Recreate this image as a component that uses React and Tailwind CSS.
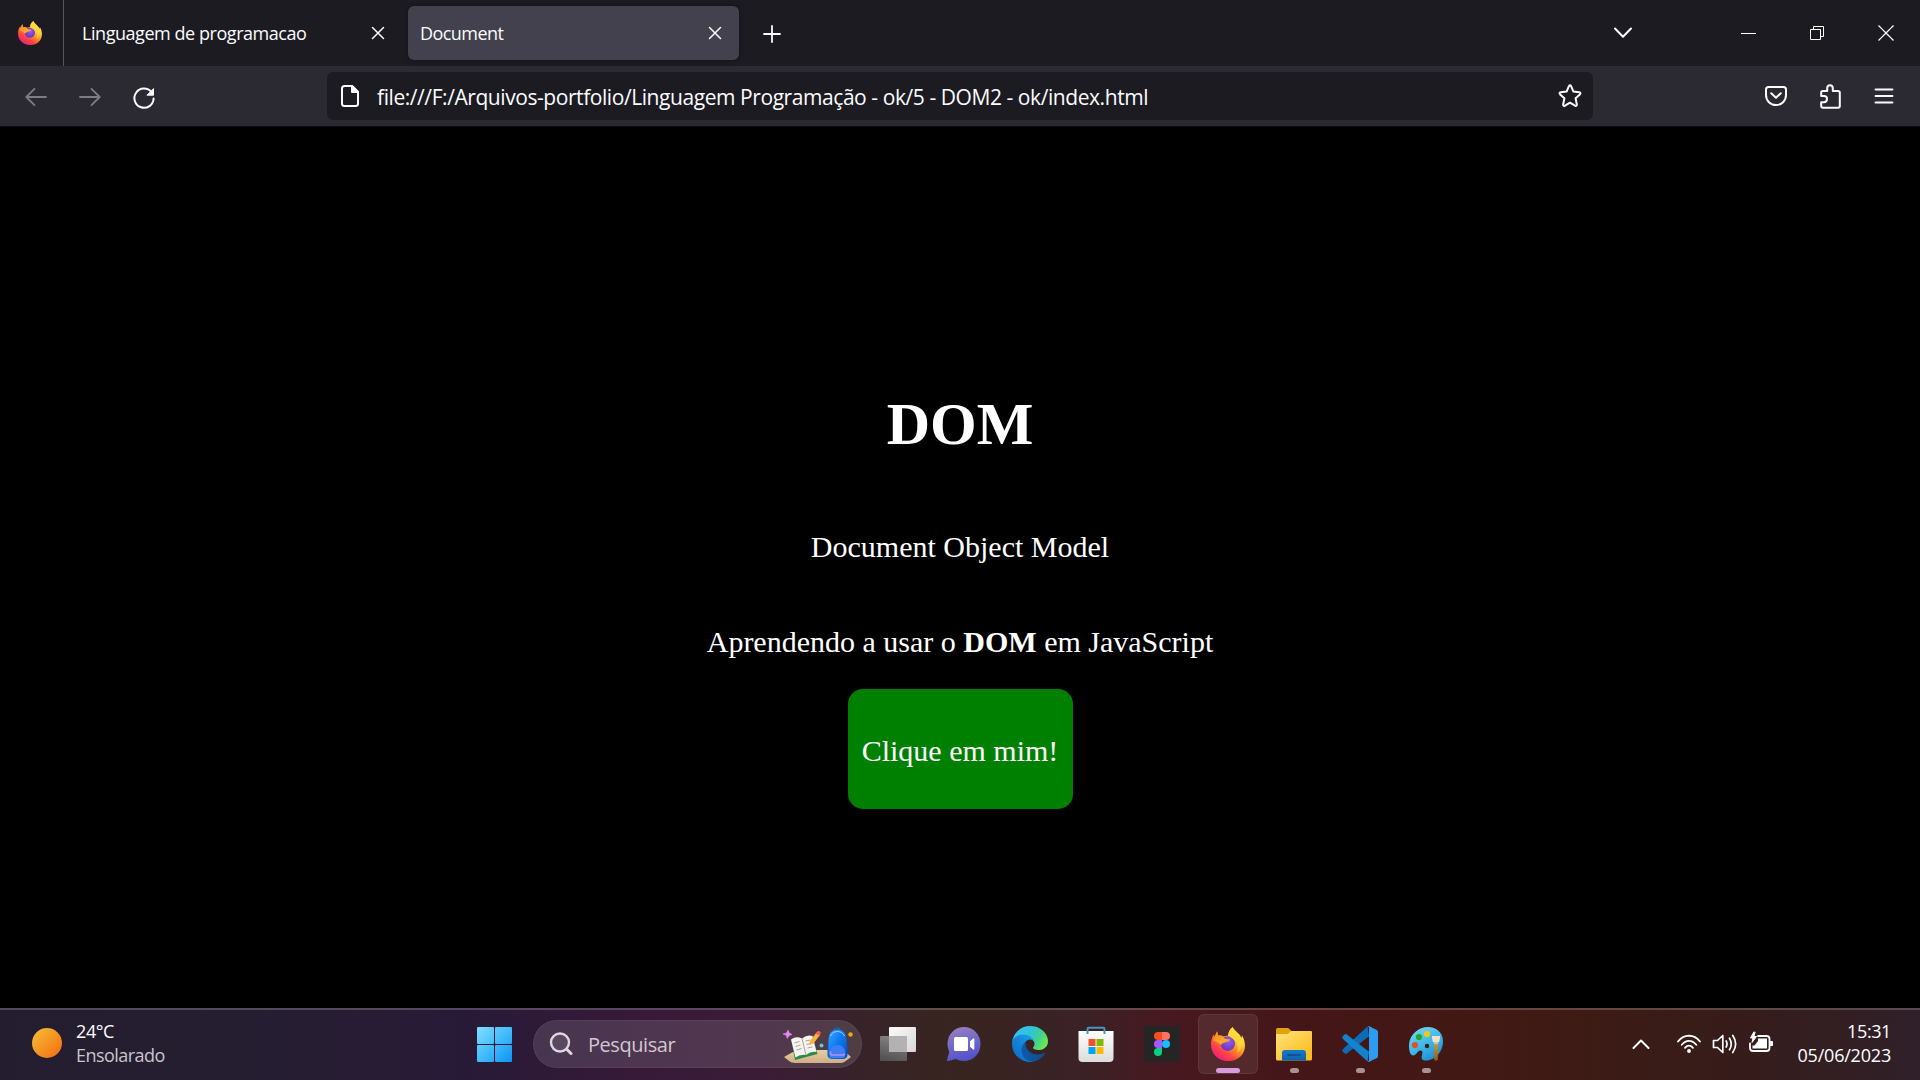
import React from "react";

function Firefox({ id, className }) {
  return (
    <svg viewBox="0 0 34 34" className={className}>
      <defs>
        <linearGradient id={`${id}-body`} x1="0.85" y1="0.1" x2="0.25" y2="0.95">
          <stop offset="0" stopColor="#fff44f" />
          <stop offset="0.28" stopColor="#ffcb37" />
          <stop offset="0.52" stopColor="#ff8a26" />
          <stop offset="0.76" stopColor="#ff4343" />
          <stop offset="1" stopColor="#f0207c" />
        </linearGradient>
        <radialGradient id={`${id}-globe`} cx="0.55" cy="0.35" r="0.7">
          <stop offset="0" stopColor="#a05be8" />
          <stop offset="1" stopColor="#5b35b8" />
        </radialGradient>
        <linearGradient id={`${id}-head`} x1="0" y1="0" x2="1" y2="1">
          <stop offset="0" stopColor="#ff8016" />
          <stop offset="0.6" stopColor="#ffa82a" />
          <stop offset="1" stopColor="#ff9826" />
        </linearGradient>
      </defs>
      <path
        fill={`url(#${id}-body)`}
        d="M21.7 0C22.8 3.8 28.6 5.8 30.4 11C31 10 30.8 9 30.6 8C34.8 13.5 35 22 31.4 27.2C28 32 22.5 34 17 34C7 34 0 27 0 17.5C0 13 1.2 10 3 7.3L3.5 10L6 4.6L7.4 8.8C9.4 8.2 11 8.4 12.6 9.6L17 8.6C17.4 5 19 2 21.7 0Z"
      />
      <circle cx="16.800" cy="16.6" r="7.3" fill={`url(#${id}-globe)`} />
      <path
        fill={`url(#${id}-head)`}
        d="M2.2 13.5L3.5 9.7L6 4.6L7.4 8.8C10.2 8.2 12 9 13.2 11.2C14.5 12 17 11.9 19.2 12.4C18.6 14.4 16 14.7 14 15.4C12 16.5 10.800 16 10.5 17.800C8.500 17 7 14.500 2.2 13.5Z"
      />
      <path
        fill="#ffd83a"
        fillOpacity="0.75"
        d="M21.7 0C22.8 3.8 29 6.5 30.4 12.5C31.8 18 30 23.5 26.2 26C28 20.5 26 16.5 23.6 13.6C20.8 11.2 18.4 9.6 17 8.6C17.4 5 19 2 21.7 0Z"
      />
    </svg>
  );
}

function Edge() {
  return (
    <svg viewBox="0 0 256 256" className="size-9">
      <defs>
        <linearGradient id="edge-a" x1="0.25" y1="0.5" x2="1" y2="0.5">
          <stop offset="0" stopColor="#0c59a4" />
          <stop offset="1" stopColor="#114a8b" />
        </linearGradient>
        <linearGradient id="edge-b" x1="0.9" y1="0.2" x2="0.3" y2="1">
          <stop offset="0" stopColor="#1b9de2" />
          <stop offset="0.5" stopColor="#1481d8" />
          <stop offset="1" stopColor="#0a6fcb" />
        </linearGradient>
        <linearGradient id="edge-c" x1="0.1" y1="0.3" x2="1" y2="0.65">
          <stop offset="0" stopColor="#35c1f1" />
          <stop offset="0.4" stopColor="#2fc4d8" />
          <stop offset="0.7" stopColor="#42d28c" />
          <stop offset="1" stopColor="#6fea4e" />
        </linearGradient>
      </defs>
      <g transform="translate(-4.63 -4.92)">
        <path
          fill="url(#edge-a)"
          d="M235.68 195.46a93.73 93.73 0 0 1-10.54 4.71 101.87 101.87 0 0 1-35.9 6.46c-47.32 0-88.54-32.55-88.54-74.32A31.48 31.48 0 0 1 117.13 105c-42.8 1.8-53.8 46.4-53.8 72.53 0 73.88 68.09 81.37 82.76 81.37 7.91 0 19.84-2.3 27-4.56l1.31-.44a128.34 128.34 0 0 0 66.6-52.8 4 4 0 0 0-5.32-5.64z"
        />
        <path
          fill="url(#edge-b)"
          d="M110.34 246.34A79.2 79.2 0 0 1 87.6 225a80.72 80.72 0 0 1 29.53-120c3.12-1.47 8.45-4.13 15.54-4a32.35 32.35 0 0 1 25.69 13 31.88 31.88 0 0 1 6.36 18.66c0-.21 24.46-79.6-80-79.6-43.9 0-80 41.66-80 78.21a130.15 130.15 0 0 0 12.11 56 128 128 0 0 0 156.38 67.11 75.55 75.55 0 0 1-62.78-8z"
        />
        <path
          fill="url(#edge-c)"
          d="M156.94 153.78c-.81 1.05-3.3 2.5-3.3 5.66 0 2.61 1.7 5.12 4.72 7.23 14.38 10 41.49 8.68 41.56 8.68a59.56 59.56 0 0 0 30.27-8.35 61.38 61.38 0 0 0 30.43-52.88c.26-22.41-8-37.31-11.34-43.91C228.09 28.76 182.35 4.92 132.61 4.92a128 128 0 0 0-128 126.2c.48-36.54 36.8-66.05 80-66.05 3.5 0 23.46.34 42 10.07 16.34 8.58 24.9 18.94 30.85 29.21 6.18 10.67 7.28 24.15 7.28 29.52s-2.74 13.33-7.8 19.91z"
        />
      </g>
    </svg>
  );
}

function Windows() {
  return (
    <svg viewBox="0 0 36 36" className="size-9">
      <defs>
        <linearGradient id="win" gradientUnits="userSpaceOnUse" x1="0" y1="0" x2="36" y2="36">
          <stop offset="0" stopColor="#84dfff" />
          <stop offset="0.5" stopColor="#42bcfb" />
          <stop offset="1" stopColor="#0b93f2" />
        </linearGradient>
      </defs>
      <g fill="url(#win)">
        <rect x="1" y="0" width="17" height="17" rx="1" />
        <rect x="19" y="0" width="17" height="17" rx="1" />
        <rect x="1" y="18" width="17" height="17" rx="1" />
        <rect x="19" y="18" width="17" height="17" rx="1" />
      </g>
    </svg>
  );
}

function TaskView() {
  return (
    <svg viewBox="0 0 36 36" className="size-9">
      <defs>
        <linearGradient id="tv-back" x1="0" y1="0" x2="1" y2="1">
          <stop offset="0" stopColor="#fdfdfd" />
          <stop offset="1" stopColor="#d8d6d6" />
        </linearGradient>
        <linearGradient id="tv-front" x1="0.8" y1="0" x2="0.5" y2="1">
          <stop offset="0" stopColor="#8b8989" />
          <stop offset="1" stopColor="#555353" />
        </linearGradient>
      </defs>
      <rect x="9" y="1" width="27" height="25" rx="1" fill="url(#tv-back)" />
      <rect x="0" y="10" width="27" height="25" rx="1" fill="url(#tv-front)" />
      <rect x="9" y="10" width="18" height="16" fill="#b3b1b1" />
    </svg>
  );
}

function Chat() {
  return (
    <svg viewBox="0 0 36 36" className="size-9">
      <defs>
        <linearGradient id="chat" x1="0.3" y1="0" x2="0.6" y2="1">
          <stop offset="0" stopColor="#9a7cc0" />
          <stop offset="0.5" stopColor="#6f69c9" />
          <stop offset="1" stopColor="#4f50c8" />
        </linearGradient>
      </defs>
      <path
        fill="url(#chat)"
        d="M18 1C8.600 1 1.500 8.500 1.500 18C1.500 21 2.200 23.500 3.300 25.800L1.100 33.500C.9 34.400 1.600 35.200 2.600 35L9.500 33C12 34.300 15 35 18 35C27.400 35 34.500 27.500 34.500 18S27.400 1 18 1Z"
      />
      <rect x="8" y="11" width="14" height="14" rx="1.500" fill="#fff" />
      <path d="M24 15.300L27.300 12.500Q28.300 12 28.300 13.200V22.800Q28.300 24 27.300 23.500L24 20.700Z" fill="#fff" />
    </svg>
  );
}

function Store() {
  return (
    <svg viewBox="0 0 36 36" className="size-9">
      <defs>
        <linearGradient id="bag" x1="0" y1="0" x2="0" y2="1">
          <stop offset="0" stopColor="#ffffff" />
          <stop offset="1" stopColor="#dcdcdc" />
        </linearGradient>
      </defs>
      <path d="M.5 5H35.500V32Q35.500 36 31.500 36H4.500Q.5 36 .5 32Z" fill="url(#bag)" />
      <path d="M9.500 8V3Q9.500 1.800 10.700 1.800H25.300Q26.500 1.800 26.500 3V8" fill="none" stroke="#3b9ac6" strokeWidth="2" />
      <rect x="10.500" y="13" width="7" height="7" fill="#f25022" />
      <rect x="18.500" y="13" width="7" height="7" fill="#7fba00" />
      <rect x="10.500" y="21" width="7" height="7" fill="#00a4ef" />
      <rect x="18.500" y="21" width="7" height="7" fill="#ffb900" />
    </svg>
  );
}

function Figma() {
  return (
    <svg viewBox="0 0 36 36" className="size-9">
      <rect width="36" height="36" fill="#252525" />
      <path d="M18 6H14a4 4 0 0 0 0 8H18Z" fill="#f24e1e" />
      <path d="M18 6H22a4 4 0 0 1 0 8H18Z" fill="#ff7262" />
      <path d="M18 14H14a4 4 0 0 0 0 8H18Z" fill="#a259ff" />
      <circle cx="22" cy="18" r="4" fill="#1abcfe" />
      <path d="M18 22H14a4 4 0 1 0 4 4Z" fill="#0acf83" />
    </svg>
  );
}

function Folder() {
  return (
    <svg viewBox="0 0 36 36" className="size-9">
      <defs>
        <linearGradient id="folder" x1="0" y1="0" x2="1" y2="1">
          <stop offset="0" stopColor="#ffe27a" />
          <stop offset="1" stopColor="#fbb914" />
        </linearGradient>
        <linearGradient id="folder-tag" x1="0" y1="0" x2="0" y2="1">
          <stop offset="0" stopColor="#1879c8" />
          <stop offset="1" stopColor="#1061ab" />
        </linearGradient>
      </defs>
      <path d="M0 3.500Q0 2 1.500 2H11.500Q12.500 2 13.200 2.700L15.500 5H20V12H0Z" fill="#dfa10c" />
      <path d="M0 8H11Q12 8 12.800 7.200L14.400 5.600Q15 5 16 5H35Q36 5 36 6V33Q36 34.500 34.500 34.500H1.500Q0 34.500 0 33Z" fill="url(#folder)" />
      <path d="M6 34.500V27Q6 24 9 24H27Q30 24 30 27V34.500Z" fill="url(#folder-tag)" />
      <rect x="11" y="28.300" width="14" height="1.500" rx="0.700" fill="#0b4c8c" />
    </svg>
  );
}

function VSCode() {
  return (
    <svg viewBox="0 0 36 36" className="size-9">
      <path d="M25.500.4L1 23Q-.4 24.400 1 25.900L2.700 27.500Q3.700 28.300 4.800 27.500L27 10.300Z" fill="#0c6db6" />
      <path d="M25.500 35.600L1 13Q-.4 11.600 1 10.100L2.700 8.500Q3.700 7.700 4.800 8.500L27 25.700Z" fill="#1483cf" />
      <path d="M25.400.3Q26.300-.2 27.300.3L34.800 3.900Q36 4.500 36 5.800V30.200Q36 31.500 34.800 32.100L27.300 35.700Q26.300 36.200 25.400 35.700Q27 35.500 27 34V2Q27 .5 25.400.3Z" fill="#2b9cf0" />
    </svg>
  );
}

function Paint() {
  return (
    <svg viewBox="0 0 36 36" className="size-9">
      <defs>
        <linearGradient id="palette" x1="0.2" y1="0" x2="0.8" y2="1">
          <stop offset="0" stopColor="#6fd8f2" />
          <stop offset="0.6" stopColor="#35b0e4" />
          <stop offset="1" stopColor="#1a86cd" />
        </linearGradient>
        <linearGradient id="handle" x1="0" y1="0" x2="0" y2="1">
          <stop offset="0" stopColor="#d69a3a" />
          <stop offset="1" stopColor="#8d5a14" />
        </linearGradient>
      </defs>
      <path
        fill="url(#palette)"
        fillRule="evenodd"
        d="M20 1C11 1 1.500 8 1 19C.8 24 2.200 29.500 5 29.500C8.500 29.500 9.500 24 13 24.500C16.500 25.200 12.500 30 14 33C15 35 18.500 34.800 21.500 34C29.500 32 35 24 35 15.500C35 6.500 28.500 1 20 1ZM19 17.800A2.200 2.200 0 1 1 19 22.200A2.200 2.200 0 1 1 19 17.800Z"
      />
      <circle cx="7" cy="19" r="3.100" fill="#d9532c" />
      <circle cx="11" cy="11" r="3.100" fill="#27a32b" />
      <circle cx="19" cy="8" r="3.100" fill="#fdc21b" />
      <path d="M26 17H30L29.800 33.500Q28 36 26.200 33.500Z" fill="url(#handle)" />
      <path d="M24 10H32V12Q32 15 30 17H26Q24 15 24 12Z" fill="#f1dfc8" />
      <rect x="26" y="16" width="4" height="2" fill="#c9c4c0" />
    </svg>
  );
}

function SchoolArt() {
  return (
    <svg viewBox="0 0 72 38" className="h-[38px] w-[72px]">
      <defs>
        <linearGradient id="sand" x1="0" y1="0" x2="0" y2="1">
          <stop offset="0" stopColor="#e9cfa4" />
          <stop offset="1" stopColor="#cfae82" />
        </linearGradient>
        <linearGradient id="pack" x1="0" y1="0" x2="1" y2="1">
          <stop offset="0" stopColor="#3aa8ff" />
          <stop offset="0.5" stopColor="#0b78ee" />
          <stop offset="1" stopColor="#0a4fc4" />
        </linearGradient>
      </defs>
      <path d="M2 30L10 25.500Q14 23 20 23H56Q62 23 69 30L63 34.500Q61 36 58 36H13Q9 36 7 34Z" fill="url(#sand)" />
      <path d="M9.500 14L31 10L35.500 27L13 33Z" fill="#2f8a4a" />
      <path d="M9 12.500Q14 8.500 20 11.500Q25 7.500 30.500 9L34.500 25Q29 24 24 28Q18 27 13.500 30.500Z" fill="#f7f3ef" />
      <path d="M20 11.500L24 28M12.500 16L17.500 14.500M13.500 19.500L18.500 18M14.500 23L19.500 21.500M23.500 14L28.500 13M24.500 17.500L29.500 16.500M25.500 21L30.500 20" stroke="#a8a39f" strokeWidth="1" fill="none" />
      <path d="M28 14L34.500 5.500L38 8L31.500 16.500L27 18Z" fill="#f8b23f" />
      <path d="M33.500 6.500L35.500 4.200Q37.500 3.500 38.700 5.200Q39 6.500 37.500 8.800Z" fill="#ee6352" />
      <path d="M6 3L7.300 6L10 7.500L7 8.600L5.300 11.500L4.300 8.300L1 7L4.500 6Z" fill="#e58af5" stroke="#e58af5" strokeWidth="0.600" />
      <circle cx="39.500" cy="18.500" r="2" fill="#5cc7dd" />
      <circle cx="68.500" cy="7.500" r="2.200" fill="#f0a818" />
      <path d="M52 4Q52 1 55 1T58 4" fill="none" stroke="#1460b8" strokeWidth="1.500" />
      <rect x="45.500" y="14" width="20" height="17" rx="3" fill="#0a4fc4" />
      <path d="M46.500 13Q46.500 2.500 55.500 2.500T64.500 13V29Q64.500 32 61.500 32H49.500Q46.500 32 46.500 29Z" fill="url(#pack)" />
      <path d="M48.500 9Q50.500 4.500 55.500 4.500T62.500 9" fill="none" stroke="#8fd0ff" strokeWidth="1" />
      <path d="M48 26Q48 18 55.500 18T63 26V29Q63 31 61 31H50Q48 31 48 29Z" fill="#3f7df5" />
      <path d="M48.500 24.500V26.500Q48.500 28 50 28H61Q62.500 28 62.500 26.500" fill="none" stroke="#b78cf5" strokeWidth="1.600" />
    </svg>
  );
}

function Line({ w, h, className, sw = 2, children }) {
  return (
    <svg width={w} height={h} viewBox={`0 0 ${w} ${h}`} className={className} fill="none" stroke="currentColor" strokeWidth={sw} strokeLinecap="round" strokeLinejoin="round">
      {children}
    </svg>
  );
}

function TabBar() {
  return (
    <div className="flex h-[66px] items-center bg-[#1c1b22] text-[18px] tracking-[-0.45px] text-[#fbfbfe]">
      <div className="flex h-full w-16 items-center border-r border-[#55545c] pl-[18px]">
        <Firefox id="ff-tab" className="size-6" />
      </div>
      <div className="flex w-[344px] items-center justify-between pl-[18px] pr-[23px]">
        <span className="leading-6">Linguagem de programacao</span>
        <Line w={14} h={14} sw={1.500}>
          <path d="M1.500 1.500L12.500 12.500M12.500 1.500L1.500 12.500" />
        </Line>
      </div>
      <div className="flex h-[54px] w-[331px] items-center justify-between rounded-md bg-[#42414d] pl-3 pr-[17px] shadow-[0_0_4px_rgba(0,0,0,0.4)]">
        <span className="leading-6 tracking-[-0.55px]">Document</span>
        <Line w={14} h={14} sw={1.500}>
          <path d="M1.500 1.500L12.500 12.500M12.500 1.500L1.500 12.500" />
        </Line>
      </div>
      <Line w={18} h={18} sw={1.800} className="ml-6 mt-0.5">
        <path d="M9 1V17M1 9H17" />
      </Line>
      <Line w={20} h={12} className="ml-auto mr-[108px]">
        <path d="M2 1.500L10 9.700L18 1.500" />
      </Line>
      <svg width="15" height="1" viewBox="0 0 15 1" className="mr-[54px]">
        <rect width="15" height="1" fill="#fff" />
      </svg>
      <svg width="14" height="14" viewBox="0 0 14 14" fill="none" stroke="#fff" className="mr-[54px]">
        <path d="M.5 3.500H10.500V13.500H.5ZM3.500 3.500V.5H13.500V10.500H10.500" />
      </svg>
      <svg width="16" height="16" viewBox="0 0 16 16" fill="none" stroke="#fff" strokeWidth="1.200" className="mr-[26px]">
        <path d="M.5.5L15.500 15.500M15.500.5L.5 15.500" />
      </svg>
    </div>
  );
}

function NavBar() {
  return (
    <div className="flex h-[60px] items-center bg-[#2b2a33] text-[#fbfbfe]">
      <Line w={22} h={20} sw={1.800} className="ml-[25px] mt-0.5 text-[#7d7c83]">
        <path d="M21 10H1.500M9.500 1.800L1.300 10L9.500 18.200" />
      </Line>
      <Line w={22} h={20} sw={1.800} className="ml-8 mt-0.5 text-[#7d7c83]">
        <path d="M1 10H20.500M12.500 1.800L20.700 10L12.500 18.200" />
      </Line>
      <Line w={24} h={24} className="ml-[31px] mt-1">
        <path d="M19.500 6.200A9.600 9.600 0 1 0 21.600 12.500" />
        <path d="M21.500 3V9.200H15.300Z" fill="currentColor" strokeWidth="1" />
      </Line>
      <div className="ml-[171px] flex h-12 w-[1266px] items-center rounded-md bg-[#1c1b22] pl-3.5">
        <Line w={18} h={22}>
          <path d="M3.500 1H11L17 7V18.500Q17 21 14.500 21H3.500Q1 21 1 18.500V3.500Q1 1 3.500 1Z" />
          <path d="M11 1V7H17Z" fill="currentColor" />
        </Line>
        <span className="ml-[18px] mt-0.5 whitespace-nowrap text-[21px] leading-7 tracking-[-0.43px]">
          file:///F:/Arquivos-portfolio/Linguagem Programação - ok/5 - DOM2 - ok/index.html
        </span>
        <Line w={24} h={24} className="ml-auto mr-[11px]">
          <path d="M10.900 2.200Q12 .4 13.100 2.200L15.400 7.600L21.200 8.300Q23.300 8.700 21.900 10.400L17.600 14.300L18.800 20.300Q19 22.500 17 21.700L12 18.700L7 21.700Q5 22.500 5.200 20.300L6.400 14.300L2.100 10.400Q.7 8.700 2.800 8.300L8.600 7.600Z" />
        </Line>
      </div>
      <Line w={22} h={20} className="ml-[172px]">
        <path d="M3.500 1H18.500Q21 1 21 3.500V9C21 14.800 16.500 19 11 19S1 14.800 1 9V3.500Q1 1 3.500 1Z" />
        <path d="M6.200 7.200L11 11.700L15.800 7.200" />
      </Line>
      <Line w={21} h={25} className="ml-[33px]">
        <path d="M1.200 11V8.500Q1.200 7 2.700 7H7.200V4.200Q7.200 1.200 10 1.200T12.800 4.200V7H18Q19.800 7 19.800 8.800V22Q19.800 23.700 18 23.700H3Q1.200 23.700 1.200 22V18.300H4Q7 18 7 15T4 12H1.200Z" />
      </Line>
      <Line w={20} h={16} sw={1.800} className="ml-[33px]">
        <path d="M1.500 1.500H18.500M1.500 8H18.500M1.500 14.500H18.500" />
      </Line>
    </div>
  );
}

function Page() {
  return (
    <main className="flex flex-1 flex-col items-center border-t border-[#0c0c0d] bg-black pt-[263px] font-['Liberation_Serif',serif] text-[30px] leading-[34px] text-white">
      <h1 className="text-[60px] font-bold leading-[68px]">DOM</h1>
      <p className="mt-[72px]">Document Object Model</p>
      <p className="mt-[61px]">
        Aprendendo a usar o <strong>DOM</strong> em JavaScript
      </p>
      <button className="mt-[30px] h-[120px] w-[225px] rounded-[15px] bg-[#008000] pt-[3px]">Clique em mim!</button>
    </main>
  );
}

function TaskItem({ children, active, running }) {
  return (
    <div className={`relative flex h-[60px] w-[60px] items-center justify-center rounded-md ${active ? "border border-white/7 bg-white/8" : ""}`}>
      {children}
      {active && <span className="absolute bottom-0 h-[5px] w-6 rounded-full bg-[#d99be0]" />}
      {running && <span className="absolute bottom-px h-[5px] w-[9px] rounded-full bg-[#ab9292]" />}
    </div>
  );
}

function Tray() {
  return (
    <div className="ml-auto flex items-center text-white">
      <Line w={18} h={10} className="mr-[26px] -mt-0.5">
        <path d="M1.500 9L9 1.500L16.500 9" />
      </Line>
      <Line w={26} h={20} className="mr-2.5 -mt-0.5">
        <path d="M2 7.500C8-.2 18-.2 24 7.500M5.700 10.700C10 5.500 16 5.500 20.300 10.700M9 13.800C11.500 11 14.500 11 17 13.800" strokeWidth="1.800" />
        <circle cx="13" cy="17" r="1.900" fill="currentColor" stroke="none" />
      </Line>
      <Line w={26} h={22} sw={1.700} className="mr-2.5 -mt-0.5">
        <path d="M1.500 7.500H5.500L10.800 2.500V19.500L5.500 14.500H1.500Z" />
        <path d="M14.200 8Q15.800 11 14.200 14M17.500 5.200Q21 11 17.500 16.800M20.800 2.500Q26.500 11 20.800 19.500" />
      </Line>
      <Line w={26} h={22} sw={1.800} className="mr-[23px] -mt-1.5">
        <path d="M10 5H18.500Q21.500 5 21.500 8V17Q21.500 20 18.500 20H5Q2 20 2 17V12.500" />
        <path d="M10 7.500H19V17.500H4.500V14.500H6.500L10 10Z" fill="currentColor" stroke="none" />
        <path d="M22.500 10.500H24.500V14.500H22.500Z" fill="currentColor" strokeWidth="1" />
        <path d="M5.500 1.500L2.500 7H5L4 11.500L8.500 5.500H6L7 1.500Z" fill="currentColor" strokeWidth="1" />
      </Line>
      <div className="-mt-1 mr-[29px] text-right text-[18px] leading-6">
        <div className="tracking-[-0.4px]">15:31</div>
        <div className="tracking-[-0.2px]">05/06/2023</div>
      </div>
    </div>
  );
}

function Taskbar() {
  return (
    <footer className="flex h-[72px] items-center border-t-2 border-white/20 bg-[linear-gradient(90deg,#241d30_0%,#241e30_11%,#281c34_20%,#271a37_24%,#361a38_33%,#3a1c36_40%,#372427_46%,#38241f_50%,#3a2226_56%,#47181f_61%,#451618_68%,#421815_76%,#3e1b15_82%,#361c19_90%,#30202a_100%)]">
      <div className="flex w-[476px] items-center gap-3.5 pl-8">
        <div className="-mt-1 size-[30px] rounded-full bg-linear-to-br from-[#f0c236] to-[#f4650c]" />
        <div className="-mt-1 text-[18px] leading-6 tracking-[-0.4px]">
          <div className="text-white">24°C</div>
          <div className="tracking-[-0.55px] text-[#c9c5cd]">Ensolarado</div>
        </div>
      </div>
      <Windows />
      <div className="-mt-0.5 ml-[21px] mr-1.5 flex h-12 w-[329px] items-center rounded-full border border-white/5 bg-white/12 pl-[15px]">
        <svg width="24" height="24" viewBox="0 0 24 24" fill="none" stroke="#dcd6de" strokeWidth="2.400" strokeLinecap="round">
          <circle cx="11" cy="10.500" r="9" fill="#ffffff18" />
          <path d="M17.500 17L22 21.500" strokeWidth="3" />
        </svg>
        <span className="ml-[15px] mt-px text-[20px] leading-7 tracking-[-0.45px] text-[#d0c7d1]">Pesquisar</span>
        <div className="ml-auto mr-[7px] mt-1">
          <SchoolArt />
        </div>
      </div>
      <div className="-mt-0.5 flex items-center gap-1.5">
        <TaskItem><TaskView /></TaskItem>
        <TaskItem><Chat /></TaskItem>
        <TaskItem><Edge /></TaskItem>
        <TaskItem><Store /></TaskItem>
        <TaskItem><Figma /></TaskItem>
        <TaskItem active><Firefox id="ff-task" className="size-[34px]" /></TaskItem>
        <TaskItem running><Folder /></TaskItem>
        <TaskItem running><VSCode /></TaskItem>
        <TaskItem running><Paint /></TaskItem>
      </div>
      <Tray />
    </footer>
  );
}

export default function App() {
  return (
    <div className="flex h-[1080px] w-[1920px] flex-col overflow-hidden bg-black font-['Open_Sans',sans-serif]">
      <TabBar />
      <NavBar />
      <Page />
      <Taskbar />
    </div>
  );
}
